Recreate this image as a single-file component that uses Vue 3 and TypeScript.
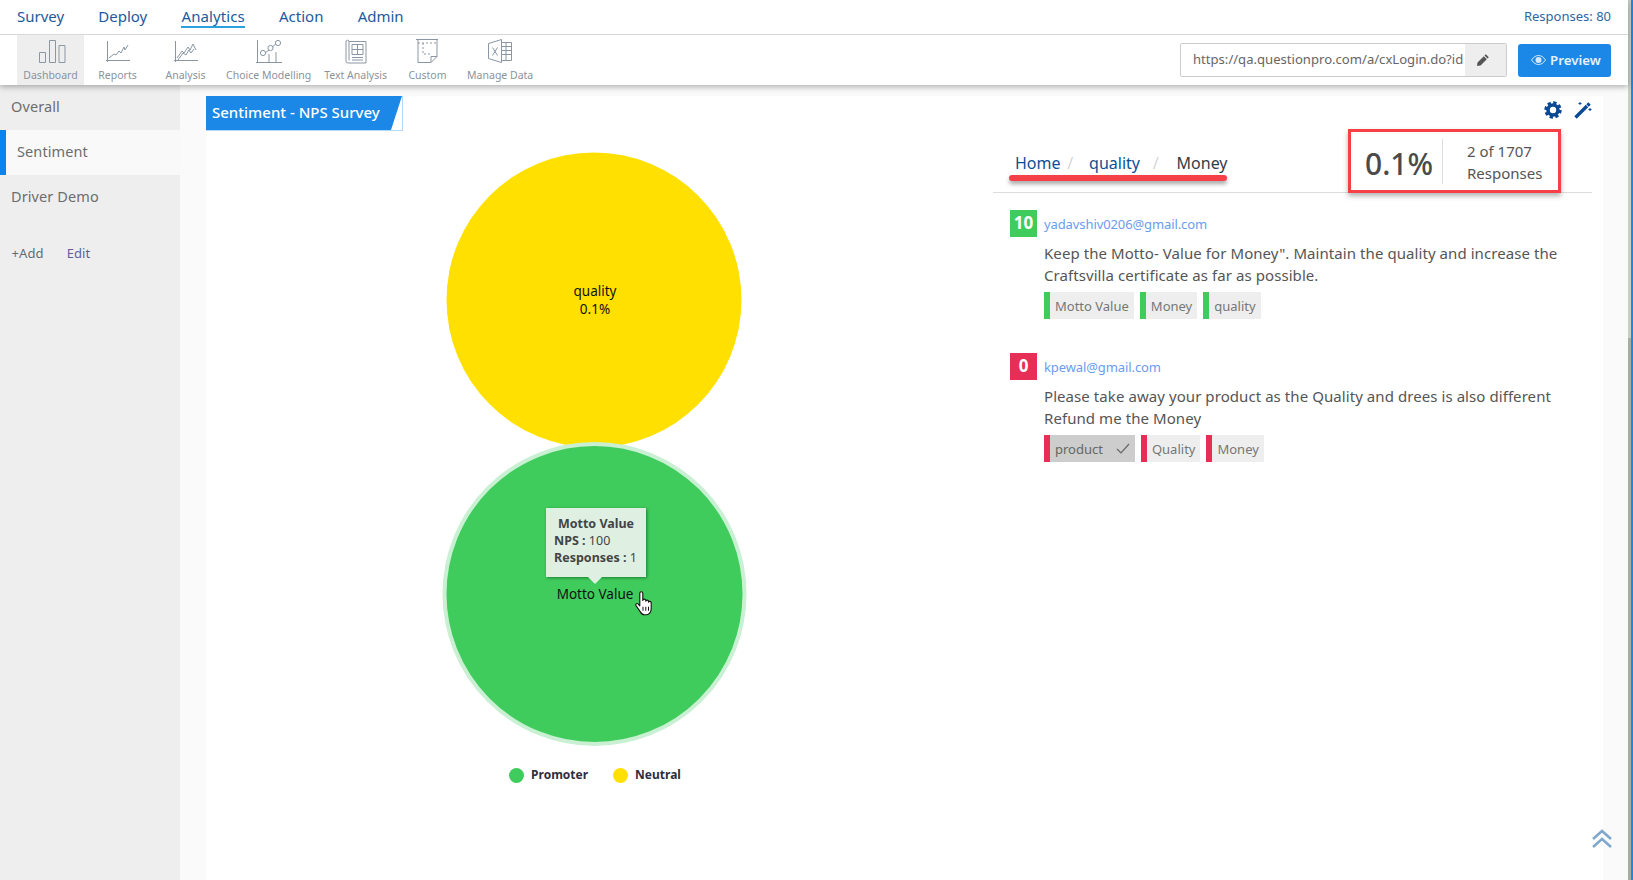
<script setup lang="ts">
interface Tag { label: string; checked?: boolean }
interface Entry { score: number; email: string; lines: string[]; tone: 'good' | 'bad'; tags: Tag[] }

const navItems: string[] = ['Survey', 'Deploy', 'Analytics', 'Action', 'Admin']
const sideItems: string[] = ['Overall', 'Sentiment', 'Driver Demo']
const entries: Entry[] = [
  {
    score: 10,
    email: 'yadavshiv0206@gmail.com',
    lines: ['Keep the Motto- Value for Money". Maintain the quality and increase the', 'Craftsvilla certificate as far as possible.'],
    tone: 'good',
    tags: [{ label: 'Motto Value' }, { label: 'Money' }, { label: 'quality' }],
  },
  {
    score: 0,
    email: 'kpewal@gmail.com',
    lines: ['Please take away your product as the Quality and drees is also different', 'Refund me the Money'],
    tone: 'bad',
    tags: [{ label: 'product', checked: true }, { label: 'Quality' }, { label: 'Money' }],
  },
]
</script>

<template>
  <div class="root">
    <div class="page">
      <header class="header">
        <div class="topnav">
          <a v-for="n in navItems" :key="n" class="nav-item" :class="{ active: n === 'Analytics' }">{{ n }}</a>
          <span class="resp-count">Responses: 80</span>
        </div>
        <div class="toolbar">
          <div class="tool t-dash">
            <svg width="30" height="25" viewBox="0 0 30 25" class="ico"><path d="M3.500 13.500h6v10h-6zM13.500 1.500h6v22h-6zM23 6.500h6v17h-6z" /></svg>
            <span>Dashboard</span>
          </div>
          <div class="tool t-rep">
            <svg width="26" height="25" viewBox="0 0 26 25" class="ico"><path d="M2.500 2v21M1 21.500h24M4 19l5-4 2 1 3-4 2 2 3-6 1 3 3-5" /></svg>
            <span>Reports</span>
          </div>
          <div class="tool t-ana">
            <svg width="26" height="25" viewBox="0 0 26 25" class="ico"><path d="M2.500 2v21M1 21.500h24M4 19l5-7 2 2 4-6 2 3 3-6 3 6M5 21l5-7 3 2 3-5 2 3 3-4" /></svg>
            <span>Analysis</span>
          </div>
          <div class="tool t-cho">
            <svg width="28" height="25" viewBox="0 0 28 25" class="ico"><path d="M2.500 1v23M1 23.500h26M14 23v-8M21 23v-10M10 14l4-3M17 8l4-3" /><circle cx="8" cy="14" r="2.600" /><circle cx="15.500" cy="9" r="2.600" /><circle cx="23" cy="4" r="2.600" /></svg>
            <span>Choice Modelling</span>
          </div>
          <div class="tool t-txt">
            <svg width="22" height="26" viewBox="0 0 22 26" class="ico"><path d="M4 22.500V3a2 2 0 0 0-3 0v20a2 2 0 0 0 2 2h18V3.500H4M7 6.500h11v10H7zM12.500 6.500v10M7 11.500h11M7 19.500h11M7 22h11" /></svg>
            <span>Text Analysis</span>
          </div>
          <div class="tool t-cus">
            <svg width="24" height="26" viewBox="0 0 24 26" class="ico"><path d="M1 1.500h22M3 1.500v23h13l6-6V2M16 24.500v-6h6" /><path d="M3 5h19M8 5v11h9" stroke-dasharray="2 2" /></svg>
            <span>Custom</span>
          </div>
          <div class="tool t-man">
            <svg width="26" height="26" viewBox="0 0 26 26" class="ico"><path d="M1.500 5.500l13-4v23l-13-4zM14.500 4.500h10v18h-10M19 4.500v18M14.500 8.500h10M14.500 12.500h10M14.500 16.500h10M5.500 9.500l5 8M10.500 9.500l-5 8" /></svg>
            <span>Manage Data</span>
          </div>
          <div class="tool-right">
            <div class="url">
              <span class="url-text">https://qa.questionpro.com/a/cxLogin.do?id</span>
              <span class="url-edit">
                <svg width="14" height="14" viewBox="0 0 14 14"><path d="M9.800 1.200l3 3-1.300 1.300-3-3zM7.800 3.200l3 3L4.500 12.500 1 13l.5-3.500z" fill="#555" /></svg>
              </span>
            </div>
            <button class="preview">
              <svg width="15" height="10" viewBox="0 0 15 10"><path d="M.5 5C2.500 2 5 .5 7.500.5S12.500 2 14.500 5c-2 3-4.500 4.500-7 4.500S2.500 8 .5 5z" fill="none" stroke="#d5e9fb" stroke-width="1" /><circle cx="7.500" cy="5" r="3" fill="#d5e9fb" /></svg>
              <span>Preview</span>
            </button>
          </div>
        </div>
      </header>

      <div class="body">
        <aside class="side">
          <div v-for="s in sideItems" :key="s" class="side-item" :class="{ current: s === 'Sentiment' }">{{ s }}</div>
          <div class="side-actions">
            <a class="add">+Add</a>
            <a class="edit">Edit</a>
          </div>
        </aside>

        <main class="main">
          <section class="panel">
            <div class="chart-col">
              <div class="title"><div class="title-fill">Sentiment - NPS Survey</div></div>
              <div class="chart">
                <svg class="bubbles" width="778" height="629" viewBox="0 0 778 629">
                  <circle cx="388" cy="169" r="147.500" fill="#ffe000" />
                  <circle cx="388.500" cy="463" r="150" fill="#40cc5c" stroke="#c9f0d3" stroke-width="4" />
                  <text x="389" y="165" class="b-label">quality</text>
                  <text x="389" y="183" class="b-label">0.1%</text>
                  <text x="389" y="468" class="b-label">Motto Value</text>
                </svg>
                <div class="tip">
                  <div class="tip-head">Motto Value</div>
                  <div><b>NPS :</b> 100</div>
                  <div><b>Responses :</b> 1</div>
                </div>
                <svg class="hand" width="18" height="25" viewBox="0 0 18 24" preserveAspectRatio="none"><path d="M4.800 2.200c0-2 3-2 3 0V9c.2-1.600 2.800-1.600 3 0v.8c.2-1.500 2.600-1.400 2.800.2v.8c.2-1.300 2.400-1.200 2.600.4V17c0 3-2 5.800-4.500 5.800H9.200c-2 0-3-1-4-3L1 14c-.8-1.300.8-2.600 2-1.600l1.800 1.800z" fill="#fff" stroke="#111" stroke-width="1.100" stroke-linejoin="round" /><path d="M8 15v4M10.800 15v4M13.500 15v4" stroke="#111" fill="none" /></svg>
              </div>
              <div class="legend">
                <span class="lg"><i class="dot green"></i>Promoter</span>
                <span class="lg"><i class="dot yellow"></i>Neutral</span>
              </div>
            </div>

            <div class="detail-col">
              <div class="tools-row">
                <svg width="18" height="18" viewBox="0 0 18 18" class="gear"><circle cx="9" cy="9" r="5" fill="none" stroke="#0a4a94" stroke-width="3.600" /><circle cx="9" cy="9" r="7.300" fill="none" stroke="#0a4a94" stroke-width="2.800" stroke-dasharray="3.300 2.430" /></svg>
                <svg width="18" height="18" viewBox="0 0 18 18" class="wand"><path d="M1.500 16.500L13 5" stroke="#0a4a94" stroke-width="3.400" fill="none" /><path d="M13.500 4.500l2-2" stroke="#0a4a94" stroke-width="3.400" fill="none" /><path d="M6 1v3M4.500 2.500h3M16 7v3M14.500 8.500h3" stroke="#0a4a94" stroke-width="1" fill="none" /></svg>
              </div>
              <div class="crumb-row">
                <div class="crumbs">
                  <a class="c-link">Home</a><span class="slash s1">/</span>
                  <a class="c-link c2">quality</a><span class="slash s2">/</span>
                  <span class="c-cur">Money</span>
                </div>
                <div class="stat">
                  <span class="pct">0.1%</span>
                  <span class="stat-txt">2 of 1707<br />Responses</span>
                </div>
                <i class="redline"></i>
              </div>

              <article v-for="e in entries" :key="e.email" class="entry">
                <div class="badge" :class="e.tone">{{ e.score }}</div>
                <div class="entry-body">
                  <div class="email">{{ e.email }}</div>
                  <p class="comment"><template v-for="l in e.lines" :key="l">{{ l }}<br /></template></p>
                  <div class="tags">
                    <span v-for="t in e.tags" :key="t.label" class="tag" :class="[e.tone, { checked: t.checked }]">
                      {{ t.label }}
                      <svg v-if="t.checked" width="14" height="11" viewBox="0 0 14 11"><path d="M1 6l4 4 8-9" fill="none" stroke="#666" stroke-width="1.200" /></svg>
                    </span>
                  </div>
                </div>
              </article>
            </div>
          </section>
          <svg class="to-top" width="20" height="19" viewBox="0 0 20 19"><path d="M1 10l9-8 9 8M1 18l9-8 9 8" fill="none" stroke="#7fa8cc" stroke-width="2.600" /></svg>
        </main>
      </div>
    </div>
    <div class="scrollbar"><div class="thumb"></div></div>
  </div>
</template>

<style>
html, body { margin: 0; padding: 0; overflow: hidden; }
</style>

<style scoped>
.root {
  display: flex;
  width: 1633px;
  height: 880px;
  overflow: hidden;
  font-family: "Noto Sans", "Open Sans", sans-serif;
  color: #555;
  background: #fff;
}
.page { flex: 1; display: flex; flex-direction: column; min-width: 0; }

.scrollbar { width: 5px; background: #ccc; border-right: 2px solid #1b87e6; box-sizing: border-box; }
.thumb { height: 338px; }
.scrollbar::after { content: ""; display: block; height: 542px; background: #aaa; }

.header { position: relative; z-index: 2; background: #fff; box-shadow: 0 2px 6px rgba(0, 0, 0, .3); }
.topnav {
  height: 31px;
  display: flex;
  align-items: center;
  border-bottom: 1px solid #d8d8d8;
  padding: 0 17px 3px;
  gap: 34.200px;
  font-size: 15px;
  color: #1c5a9e;
}
.nav-item { position: relative; line-height: 24px; }
.nav-item.active { border-bottom: 2px solid #2aa0dc; line-height: 20px; margin-top: 2px; letter-spacing: .1px; }
.resp-count { margin-left: auto; font-size: 13px; color: #2d66a5; }

.toolbar { height: 50px; display: flex; padding-left: 17px; }
.tool {
  height: 50px;
  display: flex;
  flex-direction: column;
  align-items: center;
  justify-content: flex-end;
  font-size: 10.500px;
  color: #8b939b;
  white-space: nowrap;
  padding-bottom: 3px;
  box-sizing: border-box;
}
.tool span { line-height: 14px; margin-top: 4px; }
.ico { fill: none; stroke: #8a97a3; stroke-width: 1; flex: none; }
.t-dash { width: 67px; background: #eee; }
.t-rep { width: 67px; }
.t-ana { width: 69px; }
.t-cho { width: 97.400px; }
.t-txt { width: 76.400px; }
.t-cus { width: 67.400px; }
.t-man { width: 78px; }

.tool-right { margin-left: auto; display: flex; align-items: center; gap: 11px; padding-right: 17px; }
.url {
  width: 327px;
  height: 34px;
  box-sizing: border-box;
  border: 1px solid #ccc;
  border-radius: 2px;
  display: flex;
  font-size: 13.100px;
  line-height: 30px;
  color: #666;
  overflow: hidden;
}
.url-text { flex: 1; padding-left: 12px; white-space: nowrap; overflow: hidden; }
.url-edit { width: 41px; flex: none; background: #eee; display: flex; align-items: center; justify-content: center; padding-right: 6px; box-sizing: border-box; }
.preview {
  width: 93px;
  height: 33px;
  background: #1b87e6;
  border: 0;
  border-radius: 3px;
  color: #e4f1fc;
  font: 600 13.300px "Noto Sans", sans-serif;
  display: flex;
  align-items: center;
  justify-content: center;
  gap: 4px;
  padding: 0 0 1px 3px;
}

.body { flex: 1; display: flex; min-height: 0; }
.side { width: 180px; background: #eee; font-size: 14.500px; letter-spacing: .1px; color: #6d6d6d; flex: none; }
.side-item { height: 45px; line-height: 43px; padding-left: 11px; box-sizing: border-box; }
.side-item.current { background: #f9f9f9; border-left: 6px solid #0b84ee; padding-left: 11px; }
.side-actions { display: flex; gap: 23px; padding: 21px 0 0 11.500px; font-size: 13px; line-height: 24px; }
.add { color: #5a6c80; }
.edit { color: #5d5e9a; }

.main { flex: 1; background: #fafafa; position: relative; padding: 11px 25px 0 26px; min-width: 0; }
.panel { background: #fff; height: 100%; display: flex; }
.chart-col { width: 787px; flex: none; }
.title { width: 197px; height: 35px; box-sizing: border-box; border-right: 1px solid #b5d9f8; border-bottom: 1px solid #b5d9f8; }
.title-fill {
  height: 34px;
  background: #1b87e6;
  color: #fff;
  font-size: 15px;
  font-weight: 500;
  line-height: 32px;
  padding-left: 6px;
  white-space: nowrap;
  clip-path: polygon(0 0, 100% 0, calc(100% - 11px) 100%, 0 100%);
}
.chart { position: relative; width: 778px; height: 629px; }
.bubbles { display: block; }
.b-label { font-size: 13.500px; text-anchor: middle; fill: #111; }
.tip {
  position: absolute;
  left: 340px;
  top: 377px;
  width: 100px;
  height: 69px;
  box-sizing: border-box;
  padding: 7px 0 0 8px;
  background: #dff0e3;
  box-shadow: 1px 1px 3px rgba(0, 60, 20, .55);
  font-size: 12.500px;
  line-height: 17px;
  color: #444;
}
.tip::after {
  content: "";
  position: absolute;
  left: 42px;
  bottom: -7px;
  width: 0;
  height: 0;
  border-left: 7px solid transparent;
  border-right: 7px solid transparent;
  border-top: 7px solid #dff0e3;
}
.tip-head { font-weight: 700; text-align: center; padding-right: 8px; }
.tip b { font-weight: 700; }
.hand { position: absolute; left: 429px; top: 460px; }
.legend { display: flex; justify-content: center; gap: 25px; width: 778px; padding-top: 2px; font-size: 12px; font-weight: 700; color: #2e2e3e; line-height: 26px; }
.lg { display: flex; align-items: center; gap: 7px; }
.dot { width: 15px; height: 15px; border-radius: 50%; display: block; }
.green { background: #40cc5c; }
.yellow { background: #ffe000; }

.detail-col { width: 599px; flex: none; }
.tools-row { height: 33px; display: flex; justify-content: flex-end; gap: 12px; align-items: center; padding: 0 0 6px; box-sizing: border-box; }
.crumb-row { position: relative; height: 64px; border-bottom: 1px solid #ddd; box-sizing: border-box; }
.crumbs { position: absolute; left: 22px; top: 22px; font-size: 16px; line-height: 24px; color: #0d4f96; white-space: nowrap; display: flex; }
.c-link { color: #0d4f96; }
.slash { color: #c4c4c4; font-weight: 300; margin-left: 7px; }
.c2 { margin-left: 16px; }
.s2 { margin-left: 13px; }
.c-cur { margin-left: 18px; color: #333c48; }
.redline { position: absolute; left: 16px; top: 46px; width: 218px; height: 6px; border-radius: 3px; background: #f44046; box-shadow: 0 3px 4px rgba(0, 0, 0, .35); }
.stat {
  position: absolute;
  left: 355px;
  top: 0;
  width: 213px;
  height: 64px;
  box-sizing: border-box;
  border: 3px solid #f44046;
  box-shadow: 0 3px 5px rgba(0, 0, 0, .3);
  background: #fff;
  display: flex;
  align-items: center;
}
.pct { width: 92px; padding-left: 14px; box-sizing: border-box; height: 45px; line-height: 50px; border-right: 1px solid #ddd; font-size: 30px; font-weight: 500; color: #4a4a4a; white-space: nowrap; }
.stat-txt { padding: 2px 0 0 24px; font-size: 15px; line-height: 22px; color: #555; white-space: nowrap; }

.entry { display: flex; margin-left: 17px; height: 143px; gap: 7px; }
.entry:first-of-type { margin-top: 17px; }
.badge { width: 27px; height: 27px; color: #fff; font-weight: 700; font-size: 17px; line-height: 26px; text-align: center; flex: none; }
.badge.good { background: #40cc5c; }
.badge.bad { background: #e62e56; }
.email { font-size: 13px; letter-spacing: -.1px; line-height: 28px; color: #6a9cf0; }
.comment { margin: 4px 0 6px; font-size: 15px; letter-spacing: .07px; line-height: 22px; color: #555; white-space: nowrap; }
.tags { display: flex; gap: 6px; }
.tag {
  height: 27px;
  display: flex;
  align-items: center;
  gap: 13px;
  padding: 0 5px;
  box-sizing: border-box;
  background: #eee;
  font-size: 13px;
  color: #777;
  border-left: 6px solid;
}
.tag.good { border-left-color: #40cc5c; }
.tag.bad { border-left-color: #e62e56; }
.tag.checked { background: #cdcdcd; color: #666; }

.to-top { position: absolute; right: 16px; bottom: 32px; }
</style>
